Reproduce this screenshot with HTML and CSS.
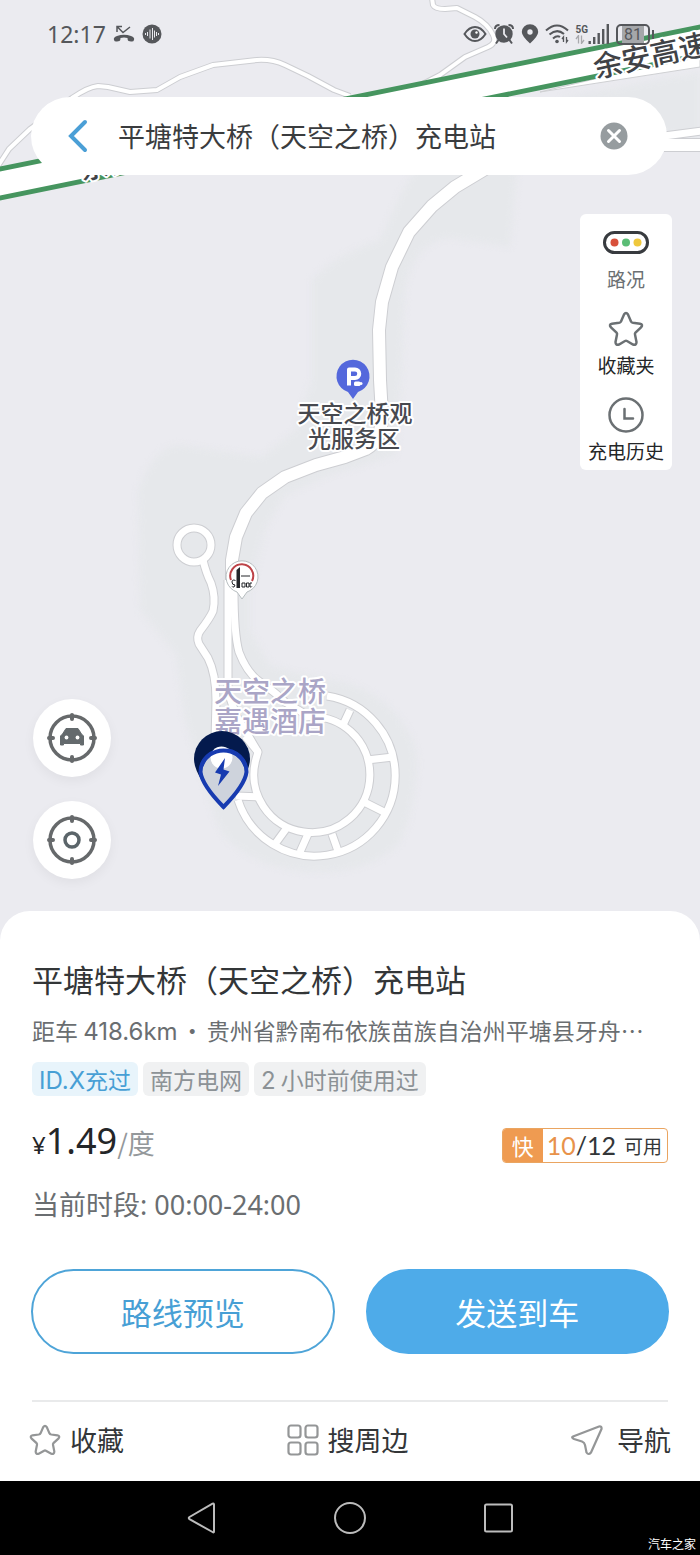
FILE: index.html
```html
<!DOCTYPE html>
<html lang="zh-CN">
<head>
<meta charset="utf-8">
<meta name="viewport" content="width=device-width, initial-scale=1">
<title>充电站详情</title>
<link rel="stylesheet" href="styles.css">
</head>
<body>
<div class="screen">
  <main class="map">
    <svg class="map-canvas" viewBox="0 0 700 950" preserveAspectRatio="xMidYMin slice" role="img" aria-label="地图">
      <defs>
        <g id="roads-thin">
          <path d="M-2 166L9 149L30 129L72 98Q88 87 98 86L108 87L130 92L157 90L180 77L213 65L257 60Q272 59 285 65L308 76L334 90L350 96"/>
          <path d="M432 -2L433 5Q435 9 445 9L457 8L475 17Q488 24 493 35Q497 43 488 47L465 57L440 75L415 88"/>
        </g>
        <g id="roads-narrow">
          <circle cx="194" cy="545" r="17"/>
          <path d="M203 560Q206 573 211 583Q216 597 213 611Q210 618 200 631Q196 637 199 644L208 658Q216 674 216 700L215 740"/>
          <path d="M228 580V692L236 715L258 752"/>
          <path d="M234 590Q234 634 239 652Q247 673 260 682Q275 692 285 702L305 714"/>
          <path d="M327 696A80.500 80.500 0 1 1 238 800"/>
          <path d="M305 717A58 58 0 1 1 256 759L258 752L245 736"/>
          <path d="M350 710L343 725M367 760L393 757M364 802L384 812M332 834L338 851M308 834L300 852M286 829L275 844M236 796L259 797"/>
          <path d="M664 136L702 131"/>
        </g>
        <g id="roads-wide">
          <path d="M500 160L455 187L432 206L409 232L392 267L382 302L379 330L380 380L382 415Q382 440 366 449L345 457L316 465L285 477L262 493L246 513L236 537L232 560V592"/>
          <path d="M664 145H702"/>
        </g>
        <clipPath id="logo-clip"><circle cx="242" cy="577" r="14"/></clipPath>
      </defs>
      <rect width="700" height="950" class="land"/>
      <g class="built">
        <path d="M312 280Q335 255 380 240L400 195L420 160H518L510 247L450 238Q415 240 405 290L400 400L396 455L330 475L285 495L265 530L250 590V630L270 665Q300 675 345 682Q400 700 416 750Q420 800 398 845Q360 880 290 870Q225 855 214 815L185 720L176 655L140 610L138 490Q155 445 180 445L262 457L295 430L312 380Z"/>
        <path d="M560 98L700 72V140L640 130Z"/>
      </g>
      <path class="ramp" d="M540 92L700 54V67Z"/>
      <g class="casing">
        <use href="#roads-thin" class="thin"/><use href="#roads-narrow" class="narrow"/><use href="#roads-wide" class="wide"/>
      </g>
      <g class="surface">
        <use href="#roads-thin" class="thin"/><use href="#roads-narrow" class="narrow"/><use href="#roads-wide" class="wide"/>
      </g>
      <path class="highway" d="M-5 170L705 26V54L-5 200Z"/>
      <path class="highway-edge" d="M-5 170L705 26M-5 199L705 54"/>
      <text class="road-name" transform="translate(82 180) rotate(-12)">余安高速</text>
      <text class="road-name" transform="translate(596 78) rotate(-12)">余安高速</text>

      <g class="poi-parking">
        <path d="M353 399L348 392A16.500 16.500 0 1 1 358 392Z"/>
        <path class="poi-letter" d="M349 385.500V369.500H355A4 4 0 0 1 355 378H350"/>
        <rect class="poi-cup" x="354" y="381.500" width="6.500" height="4.500" rx="1.500"/>
        <circle class="poi-cup" cx="361" cy="383.500" r="1.500"/>
      </g>
      <text class="place" text-anchor="middle"><tspan x="355" y="422">天空之桥观</tspan><tspan x="354" y="447">光服务区</tspan></text>

      <g>
        <path class="brand-pin" d="M242 599L237 592A16 16 0 1 1 247 592Z"/>
        <g clip-path="url(#logo-clip)">
          <path class="brand-arc" d="M231 580A11.500 11.500 0 1 1 252 581"/>
          <path class="brand-tower" d="M236.500 588V570L240 567V588Z"/>
          <path class="brand-line" d="M235.500 580.500Q232 579 232 582T235 585Q235 588 231 587M242 583H245V587H242ZM246.500 583H249V587H246.500ZM252 583H250V587H253M241 576H250"/>
        </g>
      </g>

      <text class="hotel"><tspan x="214" y="702">天空之桥</tspan><tspan x="214" y="732">嘉遇酒店</tspan></text>

      <g>
        <path class="pin-back" d="M222 731A28 28 0 0 1 250 759Q250 776 222 806Q194 776 194 759A28 28 0 0 1 222 731Z"/>
        <path class="pin-front" d="M223.500 750A23 22 0 0 1 246.500 772Q245 785 223.500 807Q202 785 200.500 772A23 22 0 0 1 223.500 750Z"/>
        <ellipse class="pin-shine" cx="221.500" cy="757.500" rx="11" ry="11"/>
        <path class="pin-rim" d="M201.500 766A23 22 0 0 1 245.500 766"/>
        <path class="pin-bolt" d="M225 758L215 772.500L221 774.500L218 786L229.500 771.500L223.500 769.500Z"/>
      </g>
    </svg>

    <header class="status">
      <div class="status-group">
        <span class="clock">12:17</span>
        <svg width="22" height="18" viewBox="0 0 22 18" aria-hidden="true"><path d="M4 7V1.500H9M4.500 2L10 7.500L17 2" fill="none" stroke="currentColor" stroke-width="1.500"/><path d="M1 15Q0 12.500 4 11Q11 8.500 18 11Q22 12.500 21 15Q20.500 17 18 16.500L15.500 16Q14.500 15.500 14.500 13Q11 12 7.500 13Q7.500 15.500 6.500 16L4 16.500Q1.500 17 1 15Z" fill="currentColor"/></svg>
        <svg width="20" height="20" viewBox="0 0 20 20" aria-hidden="true"><circle cx="10" cy="10" r="9.500" fill="currentColor"/><path d="M3.500 9V11M5.500 8V12M8 5.500V14.500M10.500 4V16M12.500 6.500V13.500M14.500 8V12M16.500 9V11" stroke="#ebebf0" stroke-width="1"/></svg>
      </div>
      <div class="status-group status-right">
        <svg width="24" height="18" viewBox="0 0 24 18" aria-hidden="true"><path d="M1.500 9Q6 2 12 2T22.500 9Q18 16 12 16T1.500 9Z" fill="none" stroke="currentColor" stroke-width="2"/><circle cx="12" cy="9" r="4.500" fill="currentColor"/><circle cx="13.500" cy="7.500" r="1.200" fill="#fff"/></svg>
        <svg width="22" height="22" viewBox="0 0 22 22" aria-hidden="true"><circle cx="11" cy="11" r="8.700" fill="currentColor"/><path d="M2 6Q2 2 6.500 2M20 6Q20 2 15.500 2M5.500 17L3 20.500M16.500 17L19 20.500" fill="none" stroke="currentColor" stroke-width="2"/><path d="M11 5.500V11L14 14.500" fill="none" stroke="#ebebf0" stroke-width="1.800"/></svg>
        <svg width="18" height="20" viewBox="0 0 18 20" aria-hidden="true"><path d="M9 19.500Q.8 12 .8 8A8.200 7.700 0 0 1 17.200 8Q17.200 12 9 19.500Z" fill="currentColor"/><circle cx="9" cy="8" r="2.700" fill="#ebebf0"/></svg>
        <svg width="24" height="20" viewBox="0 0 24 20" aria-hidden="true"><path d="M1 6.500Q12 -3.500 23 6.500M4.500 10.500Q12 4 19 10M8 14.500Q12 11 15 13" fill="none" stroke="currentColor" stroke-width="2"/><circle cx="12" cy="17.500" r="1.800" fill="currentColor"/><path d="M18.500 18V13L17 15M21.500 13V18L23 16" fill="none" stroke="currentColor" stroke-width="1.300"/></svg>
        <div class="network"><span>5G</span><svg width="10" height="9" viewBox="0 0 10 9" aria-hidden="true"><path d="M3.500 8.500V.5L1 4M6.500 .5V8.500L9 5" fill="none" stroke="#a9a9ad" stroke-width="1.300"/></svg></div>
        <svg width="22" height="20" viewBox="0 0 22 20" aria-hidden="true"><path d="M1.700 17V20M6.200 13V20M10.700 9V20M15.200 5V20M19.800 0V20" stroke="currentColor" stroke-width="2.400"/></svg>
        <div class="battery"><span>81</span></div>
      </div>
    </header>

    <form class="search" role="search">
      <button type="button" class="icon-button" aria-label="返回"><svg width="24" height="34" viewBox="0 0 24 34"><path d="M19 3L5 17L19 31" fill="none" stroke="#4b9fd6" stroke-width="4" stroke-linecap="round"/></svg></button>
      <input class="search-input" type="text" aria-label="搜索" value="平塘特大桥（天空之桥）充电站">
      <button type="button" class="icon-button" aria-label="清除"><svg width="28" height="28" viewBox="0 0 28 28"><circle cx="14" cy="14" r="13.500" fill="#969c9f"/><path d="M8.500 8.500L19.500 19.500M19.500 8.500L8.500 19.500" stroke="#fff" stroke-width="3" stroke-linecap="round"/></svg></button>
    </form>

    <nav class="tools" aria-label="地图工具">
      <button type="button" class="tool muted"><svg width="46" height="24" viewBox="0 0 46 24"><rect x="1.500" y="1.500" width="43" height="20" rx="10" fill="#fff" stroke="#383b3f" stroke-width="3"/><circle cx="11.500" cy="11.500" r="4" fill="#d8503b"/><circle cx="23" cy="11.500" r="4" fill="#5bbd76"/><circle cx="34.500" cy="11.500" r="4" fill="#efc83d"/></svg><span>路况</span></button>
      <button type="button" class="tool"><svg width="36" height="36" viewBox="0 0 36 36"><path d="M16 3.500Q18 .5 20 3.500L23 10.500Q23.500 11.500 25 11.800L32 12.700Q35.500 13.500 33 16.500L27.500 21.500Q26.700 22.500 27 23.500L28.500 31Q28.500 34.500 25 33.500L19 30Q18 29.500 17 30L11 33.500Q7.500 34.500 7.500 31L9 23.500Q9.300 22.500 8.500 21.500L3 16.500Q.5 13.500 4 12.700L11 11.800Q12.500 11.500 13 10.500Z" fill="none" stroke="#6b7073" stroke-width="2.500"/></svg><span>收藏夹</span></button>
      <button type="button" class="tool"><svg width="36" height="36" viewBox="0 0 36 36"><circle cx="18" cy="18" r="16.500" fill="none" stroke="#6b7073" stroke-width="2.500"/><path d="M16.500 12V21.500H25" fill="none" stroke="#6b7073" stroke-width="2.500" stroke-linecap="round"/></svg><span>充电历史</span></button>
    </nav>

    <div class="locators">
      <button type="button" class="locator" aria-label="车辆位置"><svg width="50" height="50" viewBox="0 0 50 50"><circle cx="25" cy="25" r="22" fill="none" stroke="#66696b" stroke-width="3.500"/><path d="M25 2V6M25 44V48M2 25H6M44 25H48" stroke="#66696b" stroke-width="4" stroke-linecap="round"/><path d="M19 15.500H31L34.500 21L36.500 23V32H33.500V30.500H16.500V32H13.500V23L15.500 21Z" fill="#646a6d" stroke="#646a6d" stroke-width="1" stroke-linejoin="round"/><circle cx="19.500" cy="24.500" r="1.900" fill="#fff"/><circle cx="30.500" cy="24.500" r="1.900" fill="#fff"/></svg></button>
      <button type="button" class="locator" aria-label="我的位置"><svg width="50" height="50" viewBox="0 0 50 50"><circle cx="25" cy="25" r="22" fill="none" stroke="#66696b" stroke-width="3.500"/><path d="M25 2V6M25 44V48M2 25H6M44 25H48" stroke="#66696b" stroke-width="4" stroke-linecap="round"/><circle cx="25" cy="25" r="7" fill="none" stroke="#5b656a" stroke-width="3.500"/></svg></button>
    </div>
  </main>

  <section class="sheet">
    <h1 class="title">平塘特大桥（天空之桥）充电站</h1>
    <p class="address">距车 <span class="latin">418.6km</span><span class="dot">·</span>贵州省黔南布依族苗族自治州平塘县牙舟…</p>
    <ul class="tags">
      <li class="tag tag-blue"><span class="latin">ID.X</span>充过</li>
      <li class="tag">南方电网</li>
      <li class="tag"><span class="latin">2</span> 小时前使用过</li>
    </ul>
    <div class="price-row">
      <p class="price"><span class="yen">¥</span><strong class="amount">1.49</strong><span class="unit">/度</span></p>
      <div class="stalls"><span class="stalls-kind">快</span><span class="stalls-count"><b>10</b>/12</span><span class="stalls-free">可用</span></div>
    </div>
    <p class="hours">当前时段: 00:00-24:00</p>
    <div class="buttons">
      <button type="button" class="button outline">路线预览</button>
      <button type="button" class="button solid">发送到车</button>
    </div>
    <div class="actions">
      <button type="button" class="action"><svg width="32" height="32" viewBox="0 0 36 36"><path d="M16 3.500Q18 .5 20 3.500L23 10.500Q23.500 11.500 25 11.800L32 12.700Q35.500 13.500 33 16.500L27.500 21.500Q26.700 22.500 27 23.500L28.500 31Q28.500 34.500 25 33.500L19 30Q18 29.500 17 30L11 33.500Q7.500 34.500 7.500 31L9 23.500Q9.300 22.500 8.500 21.500L3 16.500Q.5 13.500 4 12.700L11 11.800Q12.500 11.500 13 10.500Z" fill="none" stroke="#949697" stroke-width="2.500"/></svg>收藏</button>
      <button type="button" class="action"><svg width="32" height="32" viewBox="0 0 32 32"><g fill="none" stroke="#949697" stroke-width="2.200"><rect x="1.500" y="1.500" width="12" height="12" rx="2.500"/><rect x="18.500" y="1.500" width="12" height="12" rx="2.500"/><rect x="1.500" y="18.500" width="12" height="12" rx="2.500"/><rect x="18.500" y="18.500" width="12" height="12" rx="2.500"/></g></svg>搜周边</button>
      <button type="button" class="action action-nav"><svg width="32" height="32" viewBox="0 0 32 32"><path d="M2 12.500L28 2.500Q31 2 30.500 5L20 28.500Q17.500 31.500 15.500 28.500L14 21Q13.500 18.500 11 17.500L3 15Q0 13.500 2 12.500Z" fill="none" stroke="#949697" stroke-width="2.200" stroke-linejoin="round"/></svg>导航</button>
    </div>
  </section>

  <footer class="system-nav">
    <button type="button" aria-label="后退"><svg width="34" height="34" viewBox="0 0 34 34"><path d="M30 3.500V30.500Q30 32 28.500 31L5.500 18.200Q4 17 5.500 16L28.500 2.700Q30 2 30 3.500Z"/></svg></button>
    <button type="button" aria-label="主页"><svg width="34" height="34" viewBox="0 0 34 34"><circle cx="17" cy="17" r="15"/></svg></button>
    <button type="button" aria-label="最近任务"><svg width="34" height="34" viewBox="0 0 34 34"><rect x="3" y="3.500" width="27" height="27" rx="1.500"/></svg></button>
    <span class="watermark">汽车之家</span>
  </footer>
</div>
</body>
</html>
```
FILE: styles.css
```css
* { box-sizing: border-box; }

body {
  margin: 0;
  background: #000;
  color: #333638;
  font-family: "Noto Sans CJK SC", sans-serif;
}

h1, p, ul { margin: 0; padding: 0; }

button {
  margin: 0;
  padding: 0;
  border: 0;
  background: none;
  color: inherit;
  font: inherit;
  cursor: pointer;
}

svg { display: block; flex: none; }

.screen {
  display: flex;
  flex-direction: column;
  min-height: 100vh;
}

.latin {
  font-family: Inter, "Noto Sans CJK SC", sans-serif;
  font-size: 24px;
  line-height: 1;
}

/* Map */
.map {
  position: relative;
  display: flex;
  flex-direction: column;
  padding: 20px 28px 62px 31px;
  overflow: hidden;
  background: #ebebf0;
}

.map > * { position: relative; }

.map .map-canvas {
  position: absolute;
  inset: 0;
  width: 100%;
  height: 100%;
}

.land { fill: #ebebf0; }
.built { fill: #e6e8eb; filter: blur(3px); }
.ramp { fill: #fff; stroke: #cfd0d3; stroke-width: 1; }
.casing, .surface { fill: none; stroke-linejoin: round; }
.casing { stroke: #cdced2; }
.surface { stroke: #fff; }
.casing .thin { stroke-width: 6px; }
.casing .narrow { stroke-width: 9px; }
.casing .wide { stroke-width: 14px; }
.surface .thin { stroke-width: 4px; }
.surface .narrow { stroke-width: 7px; }
.surface .wide { stroke-width: 12px; }
.highway { fill: #fff; }
.highway-edge { fill: none; stroke: #46955f; stroke-width: 5; }

.road-name, .place, .hotel {
  stroke: #fff;
  stroke-width: 4px;
  stroke-linejoin: round;
  paint-order: stroke;
  font-weight: 500;
}

.road-name { fill: #404246; font-size: 29px; }
.place { fill: #47494f; font-size: 23px; }
.hotel { fill: #aaa5c6; font-size: 28px; }

.poi-parking { fill: #5468dc; }
.poi-letter { fill: none; stroke: #fff; stroke-width: 4; stroke-linejoin: round; }
.poi-cup { fill: #fff; }

.brand-pin { fill: #fff; stroke: #b7bec0; stroke-width: 1; }
.brand-arc { fill: none; stroke: #bd4348; stroke-width: 2; }
.brand-tower { fill: #24262a; }
.brand-line { fill: none; stroke: #24262a; stroke-width: 1; }

.pin-back { fill: #041a4d; }
.pin-front { fill: #ced3dc; stroke: #173bb0; stroke-width: 4; }
.pin-shine { fill: #fff; }
.pin-rim { fill: none; stroke: #173bb0; stroke-width: 4; }
.pin-bolt { fill: #173bb0; }

.status {
  display: flex;
  justify-content: space-between;
  align-items: center;
  height: 28px;
  padding: 0 22px 0 16px;
  color: #55575b;
}

.status-group { display: flex; align-items: center; gap: 7px; }
.status-right { gap: 6px; }
.clock { font: 23px/28px "Noto Sans", sans-serif; }

.network {
  display: flex;
  flex-direction: column;
  align-items: flex-start;
  margin-right: -6px;
  font: bold 10px/11px Roboto, sans-serif;
}

.battery {
  position: relative;
  width: 34px;
  padding: 0 4px;
  border: 2px solid #55575b;
  border-radius: 5px;
  font: 16px/17px Roboto, sans-serif;
  text-align: center;
}

.battery span { display: block; background: #a5a7aa; }

.battery::after {
  content: "";
  position: absolute;
  top: 4px;
  right: -6px;
  width: 2px;
  height: 9px;
  background: #55575b;
}

.search {
  display: flex;
  align-items: center;
  gap: 28px;
  height: 78px;
  margin: 49px 5px 0 0;
  padding: 0 39px 0 35px;
  border-radius: 39px;
  background: #fff;
}

.search-input {
  flex: 1;
  min-width: 0;
  padding: 0;
  border: 0;
  outline: 0;
  background: none;
  color: #3a3c3e;
  font: 27px/40px "Noto Sans CJK SC", sans-serif;
}

.tools {
  display: flex;
  flex-direction: column;
  align-self: flex-end;
  gap: 18px;
  margin-top: 39px;
  padding: 17px 8px 5px;
  border-radius: 6px;
  background: #fff;
  color: #242628;
}

.tool {
  display: flex;
  flex-direction: column;
  align-items: center;
  gap: 4px;
  font-size: 19px;
  line-height: 28px;
}

.muted { gap: 10px; color: #6b7073; }

.locators {
  display: flex;
  flex-direction: column;
  align-items: flex-start;
  gap: 24px;
  margin: 229px 0 0 2px;
}

.locator {
  display: grid;
  place-items: center;
  width: 78px;
  height: 78px;
  border-radius: 50%;
  background: #fff;
  box-shadow: 0 4px 12px #0000000d;
}

/* Station details */
.sheet {
  position: relative;
  flex: 1;
  margin-top: -30px;
  padding: 45px 32px 18px;
  border-radius: 30px 30px 0 0;
  background: #fff;
}

.title {
  font-size: 31px;
  font-weight: 400;
  line-height: 46px;
}

.address {
  margin-top: 11px;
  overflow: hidden;
  color: #6a6e71;
  font-size: 23px;
  line-height: 34px;
  white-space: nowrap;
}

.dot { display: inline-block; width: 29px; text-align: center; }

.tags {
  display: flex;
  flex-wrap: wrap;
  gap: 5px;
  margin-top: 15px;
  list-style: none;
}

.tag {
  padding: 0 7px;
  border-radius: 6px;
  background: #f0f1f2;
  color: #8c9296;
  font-size: 23px;
  line-height: 34px;
}

.tag-blue { background: #e8f4fb; color: #479fd5; }

.price-row {
  display: flex;
  justify-content: space-between;
  align-items: flex-end;
  margin-top: 27px;
}

.price { display: flex; align-items: baseline; line-height: 36px; }
.yen { color: #242628; font: 24px/36px "Noto Sans", sans-serif; }
.amount { color: #242628; font: 36px/36px "Noto Sans", sans-serif; }
.unit { color: #94989b; font-size: 27px; }

.stalls {
  display: flex;
  align-items: center;
  overflow: hidden;
  border: 1px solid #eaa561;
  border-radius: 4px;
  line-height: 33px;
}

.stalls-kind {
  width: 40px;
  background: #ef9b51;
  color: #fff;
  font-size: 22px;
  text-align: center;
}

.stalls-count { padding-left: 4px; font: 25px/33px Lato, sans-serif; }
.stalls-count b { color: #e8924a; font-weight: 400; }
.stalls-free { padding: 0 5px 0 8px; font-size: 19px; }

.hours {
  margin-top: 22px;
  color: #6a6e71;
  font: 27px/40px "Noto Sans", "Noto Sans CJK SC", sans-serif;
}

.buttons {
  display: grid;
  grid-template-columns: 1fr 1fr;
  gap: 31px;
  margin: 44px -1px 0;
}

.button {
  height: 85px;
  border: 2px solid #4ea4d8;
  border-radius: 43px;
  font-size: 31px;
  line-height: 44px;
}

.outline { color: #479fd5; }
.solid { border-color: #4eabe9; background: #4eabe9; color: #fff; }

.actions {
  display: flex;
  justify-content: space-between;
  align-items: center;
  margin: 46px -3px 0;
  padding-top: 18px;
  background: linear-gradient(#e9eaeb, #e9eaeb) center top / calc(100% - 6px) 2px no-repeat;
}

.action {
  display: flex;
  align-items: center;
  gap: 9px;
  font-size: 27px;
  line-height: 44px;
}

.action-nav { gap: 14px; }

/* System navigation */
.system-nav {
  position: relative;
  display: flex;
  justify-content: center;
  align-items: center;
  gap: 115px;
  height: 74px;
  background: #000;
}

.system-nav svg { fill: none; stroke: #bcbcbc; stroke-width: 2; }

.watermark {
  position: absolute;
  right: 4px;
  bottom: 2px;
  color: #fff;
  font-size: 12px;
  line-height: 18px;
}
```
